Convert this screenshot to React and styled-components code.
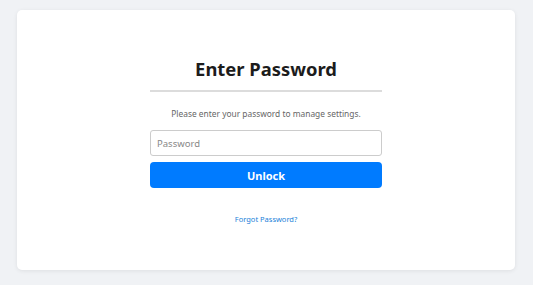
import React, { useState } from 'react';
import styled, { createGlobalStyle } from 'styled-components';

const GlobalStyle = createGlobalStyle`
  html, body {
    margin: 0;
    padding: 0;
    background: #f0f2f5;
    font-family: "Noto Sans", "Open Sans", sans-serif;
  }
`;

export default function App() {
  const [password, setPassword] = useState('');

  return (
    <>
      <GlobalStyle />
      <StyledPage>
        <StyledCard>
          <StyledForm onSubmit={(e) => e.preventDefault()}>
            <StyledTitle>Enter Password</StyledTitle>
            <StyledHint>Please enter your password to manage settings.</StyledHint>
            <StyledInput
              type="password"
              placeholder="Password"
              value={password}
              onChange={(e) => setPassword(e.target.value)}
            />
            <StyledButton type="submit">Unlock</StyledButton>
            <StyledLink href="#">Forgot Password?</StyledLink>
          </StyledForm>
        </StyledCard>
      </StyledPage>
    </>
  );
}

const StyledPage = styled.div`
  box-sizing: border-box;
  height: 285px;
  padding: 10px 18px 15px 17px;
`;

const StyledCard = styled.div`
  height: 100%;
  background: #fff;
  border-radius: 5px;
  box-shadow: 0 1px 4px rgba(0, 0, 0, 0.08);
  display: flex;
  justify-content: center;
`;

const StyledForm = styled.form`
  width: 232px;
  display: flex;
  flex-direction: column;
  padding-top: 45px;
`;

const StyledTitle = styled.h1`
  margin: 0;
  padding-bottom: 7px;
  border-bottom: 2px solid #dcdcdc;
  text-align: center;
  font-size: 18.4px;
  line-height: 28px;
  font-weight: 700;
  color: #1c1c1c;
`;

const StyledHint = styled.p`
  margin: 15px 0 9px;
  text-align: center;
  font-size: 8.4px;
  line-height: 14px;
  color: #666;
`;

const StyledInput = styled.input`
  box-sizing: border-box;
  height: 26px;
  padding: 0 6px;
  border: 1px solid #ccc;
  border-radius: 3px;
  font-family: inherit;
  font-size: 9.5px;
  color: #333;
  outline: none;

  &::placeholder {
    color: #888;
  }
`;

const StyledButton = styled.button`
  margin-top: 6px;
  height: 26px;
  border: none;
  border-radius: 4px;
  background: #007bff;
  color: #fff;
  font-family: inherit;
  font-size: 11px;
  font-weight: 700;
  cursor: pointer;
`;

const StyledLink = styled.a`
  margin-top: 26px;
  align-self: center;
  font-size: 7.5px;
  color: #1a7fd9;
  text-decoration: none;
`;
